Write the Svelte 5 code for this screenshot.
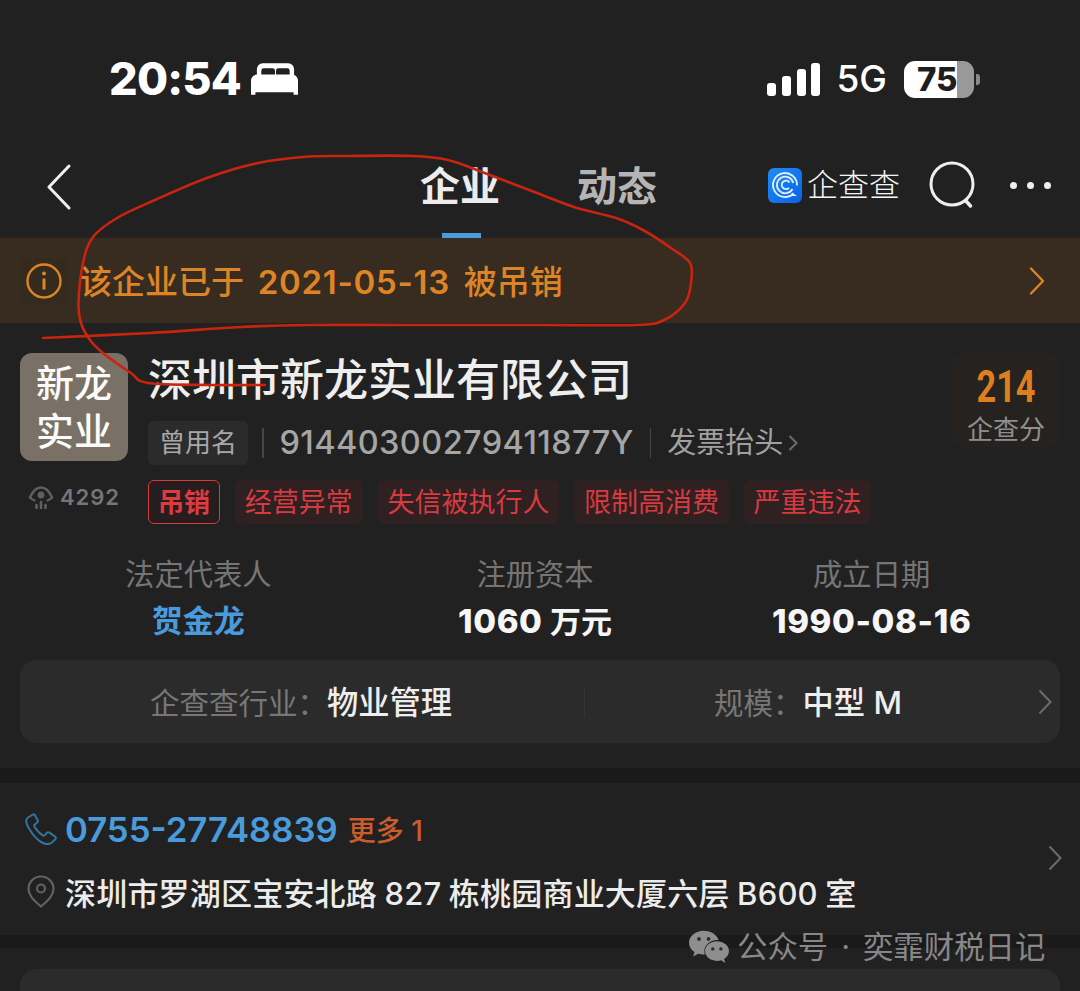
<script>
  const tags = ['经营异常', '失信被执行人', '限制高消费', '严重违法'];

  // Sample points of the hand-drawn ink circle over the screenshot
  const ink = [
    [265, 385], [210, 385], [148, 383], [131, 373], [103, 353], [90, 340], [81, 323], [78.5, 303],
    [83, 263], [93, 237], [117, 218], [155, 200], [207, 178], [258, 163], [303, 157], [344, 156],
    [413, 156], [448, 160], [482, 172], [537, 193], [574, 207], [616, 218], [643, 230], [671, 248],
    [690, 263], [691, 283], [685, 303], [664, 320], [636, 325], [540, 325], [400, 325], [310, 325],
    [241, 327], [150, 333], [43, 338]
  ];

  function smooth(p) {
    let d = `M${p[0][0]} ${p[0][1]}`;
    for (let i = 0; i < p.length - 1; i++) {
      const a = p[Math.max(i - 1, 0)];
      const b = p[i];
      const c = p[i + 1];
      const e = p[Math.min(i + 2, p.length - 1)];
      const c1x = b[0] + (c[0] - a[0]) / 6;
      const c1y = b[1] + (c[1] - a[1]) / 6;
      const c2x = c[0] - (e[0] - b[0]) / 6;
      const c2y = c[1] - (e[1] - b[1]) / 6;
      d += `C${c1x.toFixed(1)} ${c1y.toFixed(1)} ${c2x.toFixed(1)} ${c2y.toFixed(1)} ${c[0]} ${c[1]}`;
    }
    return d;
  }
  const inkPath = smooth(ink);
</script>

<div class="page">
  <header class="status">
    <div class="clock">
      <span class="time">20:54</span>
      <svg class="bed" viewBox="0 0 48 32" width="47" height="32" aria-hidden="true">
        <path fill="#fff" fill-rule="evenodd" d="M12 0h26a6 6 0 0 1 6 6v6H6V6a6 6 0 0 1 6-6zM13 5a2.500 2.500 0 0 0-2.500 2.500V12h14V7.500A2.500 2.500 0 0 0 22 5zm15 0a2.500 2.500 0 0 0-2.500 2.500V12h14V7.500A2.500 2.500 0 0 0 37 5z"/>
        <path fill="#fff" d="M6 11.500h36c3 0 6 3 6 6V32h-4.500v-2.500h-39V32H0V17.500c0-3 3-6 6-6z"/>
      </svg>
    </div>
    <div class="sys">
      <div class="bars">
        <i class="b1"></i><i class="b2"></i><i class="b3"></i><i class="b4"></i>
      </div>
      <span class="net">5G</span>
      <div class="battery">
        <div class="cell"><span>75</span></div>
        <i class="nub"></i>
      </div>
    </div>
  </header>

  <nav class="nav">
    <svg class="back" viewBox="0 0 26 46" width="26" height="46" aria-hidden="true">
      <path d="M23 2 3 23l20 21" fill="none" stroke="#eee" stroke-width="3" stroke-linecap="round" stroke-linejoin="round"/>
    </svg>
    <div class="tabs">
      <span class="tab active">企业</span>
      <span class="tab">动态</span>
    </div>
    <div class="tools">
      <svg class="qcc" viewBox="0 0 34 35" width="34" height="35" aria-hidden="true">
        <defs>
          <linearGradient id="q" x1="0" y1="0" x2="1" y2="1">
            <stop offset="0" stop-color="#1f8cf5"/>
            <stop offset="1" stop-color="#0a62e6"/>
          </linearGradient>
        </defs>
        <rect width="34" height="35" rx="6" fill="url(#q)"/>
        <path d="M25.500 25.500A12 12 0 1 1 29 17.500" fill="none" stroke="#dff0ff" stroke-width="1.800"/>
        <path d="M24.500 21A8.300 8.300 0 1 1 25.300 15" fill="none" stroke="#dff0ff" stroke-width="1.800"/>
        <path d="M21 20a4.300 4.300 0 1 1 .6-5.500" fill="none" stroke="#dff0ff" stroke-width="1.800"/>
        <path d="m24 24.500 5 3.500h-6z" fill="#dff0ff"/>
      </svg>
      <span class="brand">企查查</span>
      <svg class="search" viewBox="0 0 48 48" width="48" height="48" aria-hidden="true">
        <circle cx="23" cy="23" r="21" fill="none" stroke="#eee" stroke-width="3"/>
        <path d="m37 40 4.500 5" stroke="#eee" stroke-width="3.500" stroke-linecap="round"/>
      </svg>
      <div class="dots"><i></i><i></i><i></i></div>
    </div>
    <i class="underline"></i>
  </nav>

  <section class="banner">
    <div class="info">
      <svg viewBox="0 0 36 36" width="36" height="36" aria-hidden="true">
        <circle cx="18" cy="18" r="16.500" fill="none" stroke="#dd8526" stroke-width="2.400"/>
        <circle cx="18" cy="10.500" r="2" fill="#dd8526"/>
        <path d="M18 15.500v11" stroke="#dd8526" stroke-width="3"/>
      </svg>
    </div>
    <span class="banner-text">该企业已于 <span class="date">2021-05-13</span> 被吊销</span>
    <svg class="banner-go" viewBox="0 0 16 28" width="16" height="28" aria-hidden="true">
      <path d="m2 1.500 12 12.500L2 26.500" fill="none" stroke="#dd8526" stroke-width="2.400" stroke-linecap="round" stroke-linejoin="round"/>
    </svg>
  </section>

  <section class="company">
    <div class="head">
      <div class="side">
        <div class="logo"><span>新龙</span><span>实业</span></div>
        <div class="views">
          <svg viewBox="0 0 26 24" width="26" height="24" aria-hidden="true">
            <path d="M2 12.500C5 5.500 9 2.500 13 2.500s8 3 11 10" fill="none" stroke="#5f5f5f" stroke-width="2.600" stroke-linecap="round"/>
            <circle cx="13" cy="10" r="3.400" fill="#5f5f5f"/>
            <path d="M2 12.500c1.500 1.500 3 2.500 4.500 3M24 12.500c-1.500 1.500-3 2.500-4.500 3" fill="none" stroke="#5f5f5f" stroke-width="2.200" stroke-linecap="round"/>
            <path d="M8.500 23v-3M13 23v-6M17.500 23v-3" stroke="#5f5f5f" stroke-width="2.600" stroke-linecap="round"/>
          </svg>
          <span>4292</span>
        </div>
      </div>
      <div class="main">
        <h1>深圳市新龙实业有限公司</h1>
        <div class="ids">
          <span class="chip">曾用名</span>
          <i class="sep first"></i>
          <span class="code">91440300279411877Y</span>
          <i class="sep"></i>
          <span class="invoice">发票抬头</span>
          <svg viewBox="0 0 10 18" width="10" height="18" aria-hidden="true">
            <path d="m1.500 2 7 7-7 7" fill="none" stroke="#6c6c6c" stroke-width="2"/>
          </svg>
        </div>
        <div class="tags">
          <span class="tag revoked">吊销</span>
          {#each tags as t}
            <span class="tag">{t}</span>
          {/each}
        </div>
      </div>
      <div class="score">
        <b>214</b>
        <span>企查分</span>
      </div>
    </div>

    <div class="facts">
      <div class="fact">
        <span class="label">法定代表人</span>
        <span class="value link">贺金龙</span>
      </div>
      <div class="fact">
        <span class="label">注册资本</span>
        <span class="value"><span class="num">1060</span> 万元</span>
      </div>
      <div class="fact">
        <span class="label">成立日期</span>
        <span class="value"><span class="num">1990-08-16</span></span>
      </div>
    </div>

    <div class="industry">
      <div class="ind-a"><span class="k">企查查行业：</span><span class="v">物业管理</span></div>
      <i class="ind-sep"></i>
      <div class="ind-b"><span class="k">规模：</span><span class="v">中型 M</span></div>
      <svg class="ind-go" viewBox="0 0 14 26" width="14" height="26" aria-hidden="true">
        <path d="m1.500 1.500 11 11.500-11 11.500" fill="none" stroke="#6c6c6c" stroke-width="2"/>
      </svg>
    </div>
  </section>

  <section class="contact">
    <div class="lines">
      <div class="line">
        <svg class="ic" viewBox="0 0 32 32" width="32" height="32" aria-hidden="true">
          <path d="M8 1.500 3 4.500C.5 6 .8 10 4 15.500c3.500 6 8.500 12 14 14.500 4 1.800 7 1.200 9-.5l3.300-3.200c.8-.9.7-2-.2-2.700l-5.600-4c-.9-.6-1.900-.5-2.600.3l-2 2.200c-.6.600-1.300.7-2 .3-3-1.800-6.500-5.500-8.500-9-.4-.8-.2-1.500.4-2l2.300-1.900c.8-.7 1-1.700.5-2.600L9.800 2c-.4-.7-1.100-1-1.800-.5z" fill="none" stroke="#34729f" stroke-width="2"/>
        </svg>
        <span class="phone">0755-27748839</span>
        <span class="more">更多 1</span>
      </div>
      <div class="line addr">
        <svg class="ic pin" viewBox="0 0 28 33" width="28" height="33" aria-hidden="true">
          <path d="M14 1.500C7 1.500 1.500 7 1.500 14c0 6.500 6 12.500 12.500 17.500C20.500 26.500 26.500 20.500 26.500 14 26.500 7 21 1.500 14 1.500z" fill="none" stroke="#626262" stroke-width="2.200"/>
          <circle cx="14" cy="13.500" r="4" fill="none" stroke="#626262" stroke-width="2.200"/>
        </svg>
        <span class="address">深圳市罗湖区宝安北路 827 栋桃园商业大厦六层 B600 室</span>
      </div>
    </div>
    <svg class="go" viewBox="0 0 14 26" width="14" height="26" aria-hidden="true">
      <path d="m1.500 1.500 11 11.500-11 11.500" fill="none" stroke="#6c6c6c" stroke-width="2"/>
    </svg>
  </section>

  <section class="next"><div class="next-card"></div></section>

  <div class="watermark">
    <svg viewBox="0 0 42 34" width="40" height="34" aria-hidden="true">
      <path d="M15.500 0C7 0 0 5.600 0 12.600c0 4 2.200 7.400 5.800 9.700L4.300 27l5.300-2.800c1.800.5 3.900.8 5.900.8h1.200c-.4-1.200-.6-2.400-.6-3.700 0-6.500 6.300-11.700 14.100-11.700h.9C29 4 22.900 0 15.500 0z" fill="#8e8e8e"/>
      <path d="M42 21.300c0-5.700-5.700-10.300-12.600-10.300s-12.600 4.600-12.600 10.300 5.700 10.300 12.600 10.300c1.600 0 3-.2 4.400-.6l4.300 2.800-1.200-4.200c3.200-1.900 5.100-4.900 5.100-8.300z" fill="#8e8e8e"/>
      <circle cx="10.500" cy="8.500" r="2" fill="#2b2b2b"/><circle cx="20.500" cy="8.500" r="2" fill="#2b2b2b"/>
      <circle cx="25" cy="19" r="1.800" fill="#2b2b2b"/><circle cx="33.500" cy="19" r="1.800" fill="#2b2b2b"/>
    </svg>
    <span>公众号<span class="mid">·</span>奕霏财税日记</span>
  </div>

  <svg class="annotation" viewBox="0 0 1080 991" width="1080" height="991" aria-hidden="true">
    <path d={inkPath} fill="none" stroke="#c9240f" stroke-width="2.600" stroke-linecap="round" stroke-linejoin="round"/>
  </svg>
</div>

<style>
  :global(body) {
    margin: 0;
    background: #212121;
  }
  .page {
    position: relative;
    width: 1080px;
    height: 991px;
    overflow: hidden;
    background: #212121;
    color: #eee;
    font-family: Inter, "Noto Sans CJK SC", sans-serif;
  }
  i { display: block; }
  h1 { margin: 0; }

  /* status bar */
  .status {
    height: 150px;
    box-sizing: border-box;
    padding: 52px 100px 0 109px;
    display: flex;
    justify-content: space-between;
    align-items: flex-start;
  }
  .clock { display: flex; align-items: center; gap: 10px; height: 54px; }
  .time { font-size: 45px; font-weight: 800; color: #fff; line-height: 54px; letter-spacing: -0.8px; }
  .sys { display: flex; align-items: center; height: 54px; }
  .bars { display: flex; align-items: flex-end; gap: 5.700px; margin-top: 1px; }
  .bars i { width: 9px; background: #fff; border-radius: 3px; }
  .b1 { height: 13px; }
  .b2 { height: 20px; }
  .b3 { height: 27px; }
  .b4 { height: 33px; }
  .net { font-size: 37px; font-weight: 500; color: #fff; margin-left: 16px; line-height: 54px; }
  .battery { display: flex; align-items: center; margin-left: 17px; }
  .cell {
    width: 70px;
    height: 37px;
    border-radius: 11px;
    background: linear-gradient(90deg, #fff 0 76%, #999 76% 100%);
    display: flex;
    align-items: center;
    padding-left: 13px;
    box-sizing: border-box;
  }
  .cell span { font-size: 33px; font-weight: 800; color: #1e1e1e; line-height: 36px; }
  .nub { width: 4px; height: 11px; background: #8a8a8a; border-radius: 0 3px 3px 0; margin-left: 2px; }

  /* nav */
  .nav {
    position: relative;
    height: 88px;
    display: flex;
    align-items: flex-start;
    padding: 14px 29px 0 46px;
    box-sizing: border-box;
  }
  .back { flex: none; }
  .tabs { display: flex; gap: 77px; margin-left: 348px; }
  .tab { font-size: 40px; font-weight: 700; line-height: 46px; color: #b5b5b5; }
  .tab.active { color: #ececec; }
  .underline { position: absolute; left: 442px; bottom: 0; width: 39px; height: 5px; background: #4a9bdc; }
  .tools { display: flex; align-items: center; margin-left: auto; height: 48px; margin-top: -3px; }
  .qcc { flex: none; }
  .brand { font-size: 31px; font-weight: 300; color: #f6f6f6; margin-left: 5px; line-height: 48px; }
  .search { margin-left: 29px; flex: none; }
  .dots { display: flex; gap: 10px; margin-left: 33px; }
  .dots i { width: 7px; height: 7px; border-radius: 50%; background: #eee; }

  /* banner */
  .banner {
    height: 85px;
    background: #382b1f;
    display: flex;
    align-items: center;
    padding: 0 35px 0 21px;
    color: #dd8526;
  }
  .info {
    width: 46px;
    height: 46px;
    display: grid;
    place-items: center;
    background: #352a1e;
    border-radius: 4px;
  }
  .banner-text {
    font-size: 33px;
    font-weight: 500;
    margin-left: 12px;
    padding-top: 3px;
    line-height: 46px;
    word-spacing: 5px;
  }
  .date { font-weight: 600; letter-spacing: 0.7px; }
  .banner-go { margin-left: auto; }

  /* company */
  .company {
    height: 445px;
    box-sizing: border-box;
    padding: 30px 20px 0;
  }
  .head { display: flex; gap: 20px; height: 172px; }
  .side { width: 108px; flex: none; }
  .logo {
    height: 108px;
    border-radius: 12px;
    background: #7a7166;
    display: flex;
    flex-direction: column;
    align-items: center;
    justify-content: center;
    font-size: 38px;
    line-height: 48px;
    font-weight: 500;
    color: #fbfbf9;
  }
  .views {
    display: flex;
    align-items: center;
    justify-content: center;
    gap: 6px;
    margin-top: 23px;
    color: #767676;
    font-size: 22px;
    font-weight: 600;
    letter-spacing: 1px;
    line-height: 26px;
  }
  .main { flex: 1; min-width: 0; }
  h1 { font-size: 44px; font-weight: 500; line-height: 54px; color: #eee; }
  .ids { display: flex; align-items: center; margin-top: 14px; height: 44px; color: #9c9c9c; }
  .chip {
    height: 44px;
    line-height: 44px;
    width: 100px;
    text-align: center;
    border-radius: 6px;
    background: #2b2b2b;
    font-size: 26px;
    color: #a8a8a8;
  }
  .sep { width: 1.500px; height: 30px; background: #454545; margin: 0 16px; flex: none; }
  .sep.first { margin-left: 14px; }
  .code { font-size: 32.500px; font-weight: 500; color: #a5a5a5; letter-spacing: 0.4px; line-height: 44px; }
  .invoice { font-size: 29px; line-height: 44px; color: #a0a0a0; }
  .ids svg { margin-left: 5px; }
  .tags { display: flex; gap: 15px; margin-top: 15px; }
  .tag {
    height: 44px;
    line-height: 46px;
    padding: 0 9.800px;
    box-sizing: border-box;
    border-radius: 6px;
    background: #2f2022;
    font-size: 27px;
    color: #d83a3f;
  }
  .tag.revoked {
    background: #251d1e;
    border: 1.500px solid #d73a3e;
    font-weight: 700;
    line-height: 43px;
    width: 72px;
    padding: 0;
    text-align: center;
    font-size: 26px;
    color: #e0393e;
  }
  .score {
    width: 108px;
    height: 94px;
    flex: none;
    border-radius: 12px;
    background: #252220;
    text-align: center;
  }
  .score b {
    display: block;
    font-family: Roboto, sans-serif;
    font-size: 44px;
    font-weight: 700;
    color: #dd7f1d;
    line-height: 44px;
    margin-top: 12px;
    transform: scaleX(.78);
  }
  .score span { display: block; font-size: 26px; line-height: 36px; color: #8f8f8f; margin-top: 3px; }

  .facts {
    display: grid;
    grid-template-columns: repeat(3, 1fr);
    margin: 28px 20px 0 10px;
    text-align: center;
  }
  .fact { display: flex; flex-direction: column; align-items: center; }
  .label { font-size: 29.300px; line-height: 44px; color: #757575; }
  .value { font-size: 31px; font-weight: 700; line-height: 48px; color: #f6f6f6; }
  .value.link { color: #4a9bdc; }
  .num { font-size: 33px; font-weight: 800; letter-spacing: 0.6px; }

  .industry {
    margin-top: 14px;
    height: 83px;
    border-radius: 16px;
    background: #2b2b2b;
    display: flex;
    align-items: center;
    padding-right: 8px;
  }
  .ind-a { width: 562px; margin-right: 2px; flex: none; text-align: center; padding-bottom: 3px; }
  .ind-sep { width: 1px; height: 30px; background: #333; flex: none; }
  .ind-b { flex: 1; text-align: center; padding-right: 7px; padding-bottom: 3px; }
  .ind-go { flex: none; }
  .k { font-size: 29.500px; color: #777; }
  .v { font-size: 31.300px; font-weight: 500; color: #eee; }

  /* contact */
  .contact {
    margin-top: 15px;
    height: 152px;
    box-shadow: 0 -15px 0 #1a1a1a;
    display: flex;
    align-items: center;
    padding: 2px 18px 0 25px;
    box-sizing: border-box;
    position: relative;
  }
  .lines { flex: 1; }
  .line { display: flex; align-items: center; height: 46px; }
  .addr { margin-top: 16px; }
  .ic { flex: none; }
  .pin { margin: 0 2px; }
  .phone { font-size: 34.700px; font-weight: 600; color: #4a9bdc; margin-left: 8px; }
  .more { font-size: 28px; font-weight: 500; color: #cb5c2c; margin-left: 10px; }
  .address { font-size: 31px; font-weight: 500; letter-spacing: 0.2px; word-spacing: -1px; color: #ececec; margin-left: 8px; white-space: nowrap; }
  .go { flex: none; margin-top: -4px; }

  .next {
    border-top: 13px solid #1a1a1a;
    padding: 21px 20px 0;
  }
  .next-card { height: 60px; background: #2b2b2b; border-radius: 16px 16px 0 0; }

  /* overlays */
  .watermark {
    position: absolute;
    left: 689px;
    top: 930px;
    display: flex;
    align-items: center;
    gap: 8px;
    color: #888;
    font-size: 30.400px;
    line-height: 34px;
    white-space: nowrap;
  }
  .mid { margin: 0 13px; }
  .annotation { position: absolute; left: 0; top: 0; pointer-events: none; }
</style>
